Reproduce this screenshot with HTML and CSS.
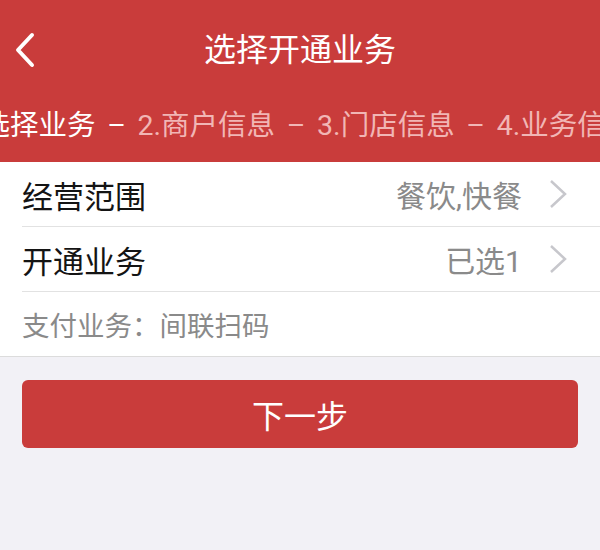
FILE: index.html
```html
<!DOCTYPE html>
<html>
<head>
  <meta charset="utf-8">
  <link rel="stylesheet" href="styles.css">
</head>
<body>
  <div class="header">
    <div class="nav">
      <span class="back">
        <svg width="22" height="36" viewBox="0 0 22 36"><path d="M18 3 L4 18 L18 33" fill="none" stroke="#fff" stroke-width="4" stroke-linecap="round" stroke-linejoin="round"/></svg>
      </span>
      <h1>选择开通业务</h1>
    </div>
    <div class="steps">
      <span class="step-on">1.选择业务<span class="sep">–</span></span><span class="step-off">2.商户信息<span class="sep">–</span>3.门店信息<span class="sep">–</span>4.业务信息</span>
    </div>
  </div>

  <div class="list">
    <div class="row">
      <span class="label">经营范围</span>
      <span class="value">餐饮,快餐</span>
      <svg class="arrow" width="20" height="30" viewBox="0 0 20 30"><path d="M3 2 L17 15 L3 28" fill="none" stroke="#c7c7cc" stroke-width="2.5"/></svg>
    </div>
    <div class="row">
      <span class="label">开通业务</span>
      <span class="value">已选1</span>
      <svg class="arrow" width="20" height="30" viewBox="0 0 20 30"><path d="M3 2 L17 15 L3 28" fill="none" stroke="#c7c7cc" stroke-width="2.5"/></svg>
    </div>
    <div class="row note">支付业务：间联扫码</div>
  </div>

  <div class="actions">
    <button class="next-btn">下一步</button>
  </div>
</body>
</html>
```

FILE: styles.css
```css
body {
  margin: 0;
  padding: 0;
  font-family: Roboto, "Noto Sans CJK SC", sans-serif;
  background: #f2f1f6;
  overflow: hidden;
}

.header {
  background: #c93c3b;
  color: white;
  height: 162px;
  overflow: hidden;
}

.nav {
  position: relative;
  height: 100px;
  display: flex;
  align-items: center;
  justify-content: center;
}

.nav h1 {
  margin: 0;
  font-size: 32px;
  font-weight: 400;
  line-height: 1;
}

.back {
  position: absolute;
  left: 14px;
  top: 32px;
  display: flex;
}

.steps {
  white-space: nowrap;
  font-size: 28.5px;
  line-height: 48px;
  padding-top: 2px;
  margin-left: -42px;
}

.sep {
  display: inline-block;
  width: 42px;
  text-align: center;
}

.step-on {
  color: #fff;
}

.step-off {
  color: #f1b6b5;
}

.list {
  background: #fff;
  border-bottom: 1px solid #dcdcdc;
}

.row {
  display: flex;
  align-items: center;
  height: 64px;
  margin-left: 22px;
  padding-right: 32px;
  border-bottom: 1px solid #e2e2e2;
}

.row:last-child {
  border-bottom: none;
}

.label {
  flex: 1;
  font-size: 31px;
  color: #141414;
}

.value {
  font-size: 30px;
  color: #8a8a8a;
  margin-right: 26px;
}

.arrow {
  display: block;
}

.note {
  font-size: 27.5px;
  color: #8a8a8a;
}

.actions {
  padding: 23px 22px;
}

.next-btn {
  width: 100%;
  height: 68px;
  border: none;
  border-radius: 6px;
  background: #c93c3b;
  color: white;
  font-family: inherit;
  font-size: 32px;
}
```
